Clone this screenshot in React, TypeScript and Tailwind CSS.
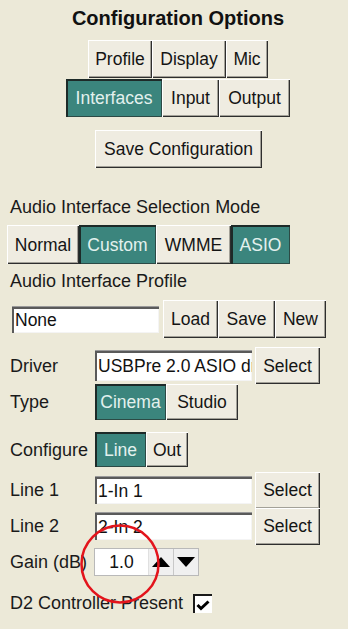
import React from 'react';

const raised =
  'bg-[#efece1] text-[#141414] shadow-[inset_1px_1px_0_#ffffff,inset_-1px_-1px_0_#2e2e2e,inset_-2px_-2px_0_#a3a198]';
const pressed =
  'bg-[#3b857d] text-[#e3f1ee] shadow-[inset_2px_2px_0_#1d2a28,inset_-1px_-1px_0_#2c4a45]';
const field =
  'bg-white text-[#111] shadow-[inset_2px_2px_0_#5a5a5a,inset_-1px_-1px_0_#f4f4f4] border-t border-[#9a9a9a]';

function Btn({ label, className, active }: { label: string; className: string; active?: boolean }) {
  return (
    <div className={`flex items-center justify-center shrink-0 ${active ? pressed : raised} ${className}`}>
      {label}
    </div>
  );
}

function Label({ text }: { text: string }) {
  return <div className="w-[95px] shrink-0 pl-[10px] text-[18px] text-[#1a1a1a]">{text}</div>;
}

function Field({ value, className }: { value: string; className: string }) {
  return (
    <div className={`shrink-0 overflow-hidden whitespace-nowrap pl-[3px] flex items-center ${field} ${className}`}>
      {value}
    </div>
  );
}

export default function App() {
  return (
    <div
      className="relative w-[348px] h-[629px] overflow-hidden bg-[#ece9d8] text-[17.5px] leading-[22px]"
      style={{ fontFamily: '"Liberation Sans", Arial, sans-serif' }}
    >
      <div className="flex flex-col">
        <div className="pt-[7px] pl-[8px] text-center font-bold text-[20px] leading-[22px] text-[#111]">
          Configuration Options
        </div>

        <div className="mt-[11px] pl-[8px] flex justify-center">
          <Btn label="Profile" className="w-[64px] h-[38px]" />
          <Btn label="Display" className="w-[74px] h-[38px]" />
          <Btn label="Mic" className="w-[42px] h-[38px]" />
        </div>
        <div className="mt-[1px] pl-[8px] flex justify-center">
          <Btn label="Interfaces" className="w-[96px] h-[38px]" active />
          <Btn label="Input" className="w-[57px] h-[38px]" />
          <Btn label="Output" className="w-[71px] h-[38px]" />
        </div>

        <div className="mt-[13px] pl-[9px] flex justify-center">
          <Btn label="Save Configuration" className="w-[167px] h-[38px]" />
        </div>

        <div className="mt-[28px] pl-[10px] text-[18px] text-[#1a1a1a]">Audio Interface Selection Mode</div>
        <div className="mt-[7px] pl-[7px] flex">
          <Btn label="Normal" className="w-[72px] h-[39px]" />
          <Btn label="Custom" className="w-[77px] h-[39px]" active />
          <Btn label="WMME" className="w-[75px] h-[39px]" />
          <Btn label="ASIO" className="w-[59px] h-[39px]" active />
        </div>

        <div className="mt-[6px] pl-[10px] text-[18px] text-[#1a1a1a]">Audio Interface Profile</div>
        <div className="mt-[8px] pl-[12px] flex items-center">
          <Field value="None" className="w-[147px] h-[27px]" />
          <div className="ml-[4px] flex">
            <Btn label="Load" className="w-[55px] h-[38px]" />
            <Btn label="Save" className="w-[57px] h-[38px]" />
            <Btn label="New" className="w-[51px] h-[38px]" />
          </div>
        </div>

        <div className="mt-[9px] flex items-center h-[37px]">
          <Label text="Driver" />
          <Field value="USBPre 2.0 ASIO driver" className="w-[157px] h-[31px]" />
          <Btn label="Select" className="ml-[3px] w-[65px] h-[37px]" />
        </div>

        <div className="flex items-center h-[36px]">
          <Label text="Type" />
          <Btn label="Cinema" className="w-[71px] h-[36px]" active />
          <Btn label="Studio" className="w-[72px] h-[36px]" />
        </div>

        <div className="mt-[12px] flex items-center h-[35px]">
          <div className="w-[95px] shrink-0 pl-[10px] text-[18px] text-[#1a1a1a] whitespace-nowrap">Configure</div>
          <Btn label="Line" className="w-[51px] h-[35px]" active />
          <Btn label="Out" className="w-[42px] h-[35px]" />
        </div>

        <div className="mt-[5px] flex items-center h-[36px]">
          <Label text="Line 1" />
          <Field value="1-In 1" className="w-[157px] h-[28px]" />
          <Btn label="Select" className="ml-[3px] w-[65px] h-[37px]" />
        </div>
        <div className="flex items-center h-[36px]">
          <Label text="Line 2" />
          <Field value="2-In 2" className="w-[157px] h-[28px]" />
          <Btn label="Select" className="ml-[3px] w-[65px] h-[37px]" />
        </div>

        <div className="mt-[4px] flex items-center h-[28px]">
          <div className="w-[94px] shrink-0 pl-[10px] text-[18px] text-[#1a1a1a] whitespace-nowrap">Gain (dB)</div>
          <div className="flex h-[28px] w-[105px] border border-[#b9b9b9] bg-[#f0f0f0]">
            <div className="w-[54px] bg-white flex items-center justify-center text-[#111] border-r border-[#e0e0e0]">
              1.0
            </div>
            <div className="w-[25px] flex items-center justify-center border-r border-[#c8c8c8]">
              <svg width="18" height="10" viewBox="0 0 18 10">
                <polygon points="9,0 18,10 0,10" fill="#000" />
              </svg>
            </div>
            <div className="flex-1 flex items-center justify-center">
              <svg width="18" height="10" viewBox="0 0 18 10">
                <polygon points="0,0 18,0 9,10" fill="#000" />
              </svg>
            </div>
          </div>
        </div>

        <div className="mt-[17px] flex items-center h-[20px]">
          <div className="pl-[10px] text-[18px] text-[#1a1a1a] whitespace-nowrap">D2 Controller Present</div>
          <div className="ml-[10px] w-[19px] h-[19px] bg-white shadow-[inset_2px_2px_0_#1a1a1a] flex items-center justify-center">
            <svg width="14" height="12" viewBox="0 0 14 12" className="mt-[3px] ml-[1px]">
              <path d="M1.5 6 L5 9.5 L12.5 2.5" stroke="#000" strokeWidth="3" fill="none" />
            </svg>
          </div>
        </div>
      </div>

      <svg className="absolute left-[80px] top-[524px]" width="82" height="82" viewBox="0 0 82 82">
        <circle cx="40" cy="40" r="38.5" stroke="#e3141c" strokeWidth="2.5" fill="none" />
      </svg>
    </div>
  );
}
